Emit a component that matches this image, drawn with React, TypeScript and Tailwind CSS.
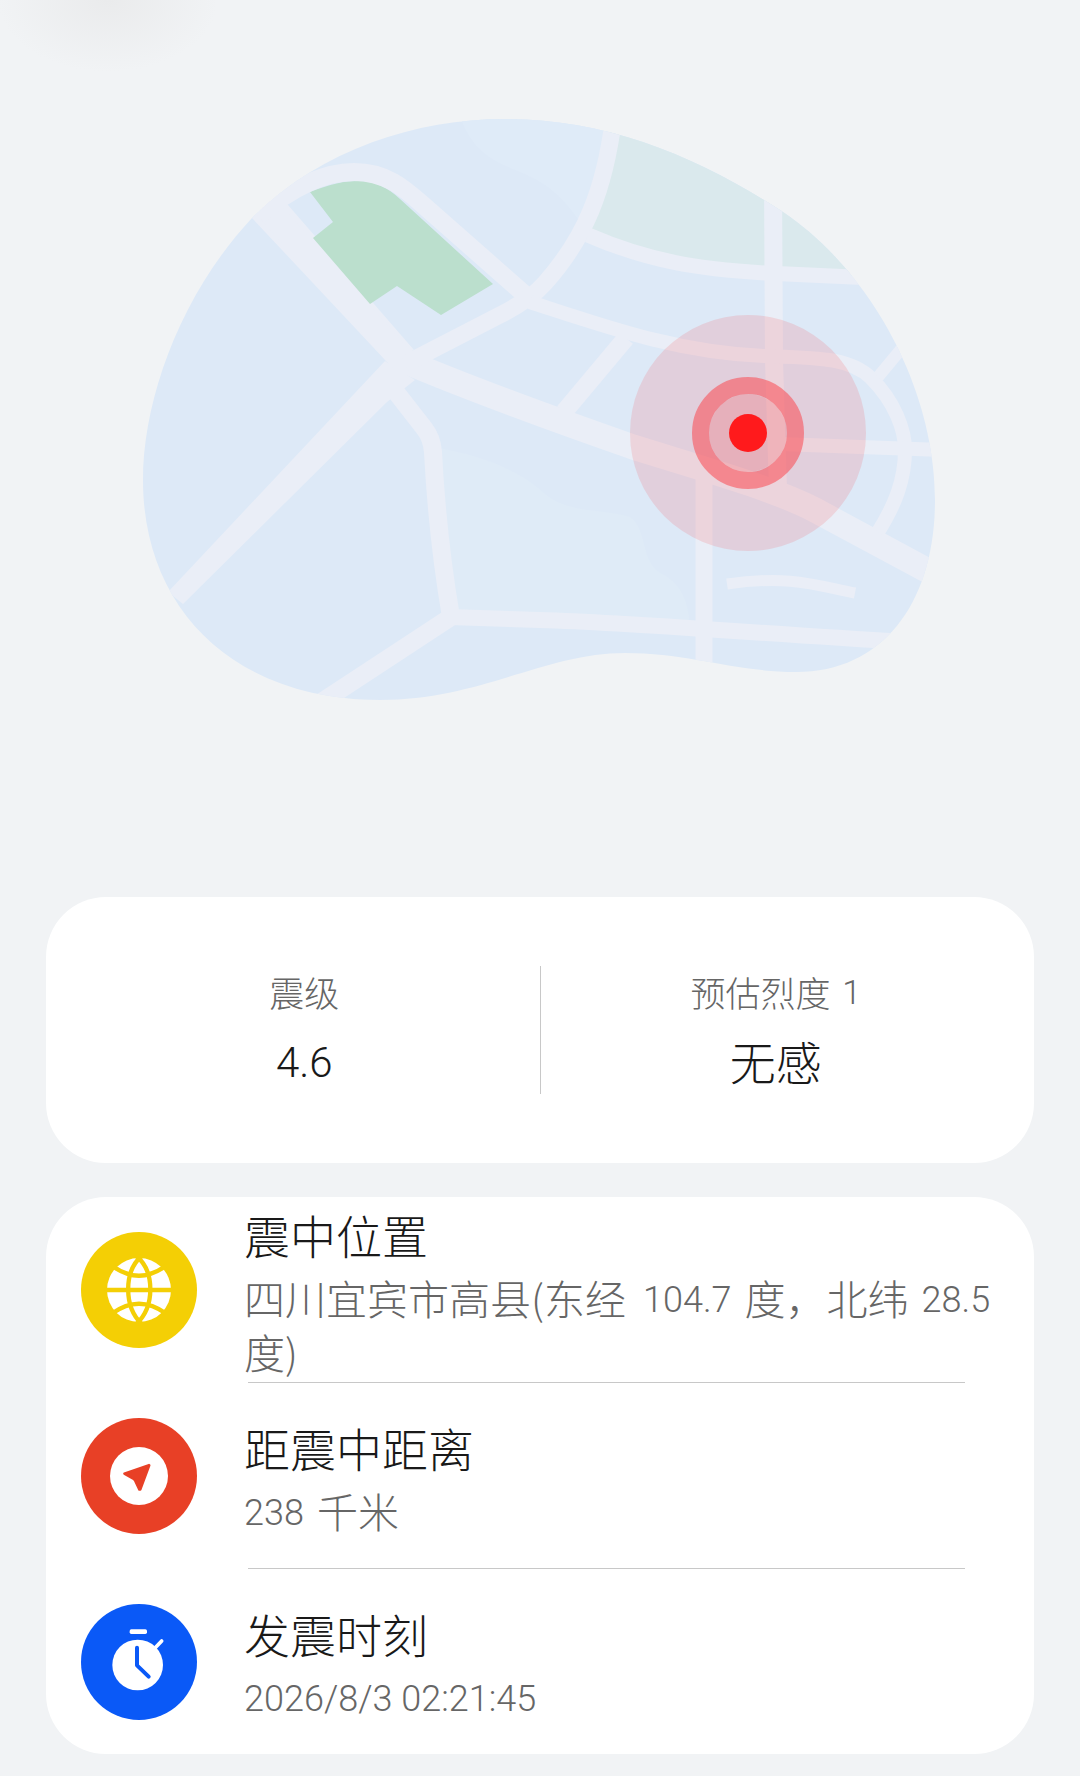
import type { ReactNode } from "react";

const ROAD = "#eaeef7";

function EpicenterMap() {
  return (
    <svg
      viewBox="144 119 792 581"
      role="img"
      aria-label="震中地图"
      className="block h-auto w-full max-w-[792px] overflow-visible"
    >
      <defs>
        <clipPath id="land">
          <path d="M505 119C610 119 700 158 783 212C872 272 935 390 935 500C935 600 885 672 796 672C735 672 690 653 625 653C545 653 480 700 380 700C235 700 143 610 143 480C143 400 180 295 252 218C320 150 415 119 505 119Z" />
        </clipPath>
      </defs>
      <g clipPath="url(#land)">
        <rect x="140" y="110" width="800" height="600" fill="#dde9f7" />
        <path d="M458 110C470 150 490 160 520 172C550 184 565 200 580 222L625 110Z" fill="#dfebf8" />
        <path d="M438 448C480 455 520 470 545 494C570 514 600 508 630 517C648 530 640 560 660 573C680 582 688 600 690 625L452 615Z" fill="#dfebf7" />
        <path d="M614 110L590 236C650 262 700 268 765 272L880 277V110Z" fill="#dae9ed" />
        <path d="M234 200L252 218L387 362L414 350L288 205L270 180Z" fill={ROAD} />
        <path
          d="M310 192C330 184 345 181 358 181C376 181 388 188 400 199L493 284L441 315L397 286L370 304L313 238L333 222Z"
          fill="#bbdfcd"
        />
        <path d="M385 361L168 592L183 604L387 402L415 380Z" fill={ROAD} />
        <g fill="none" stroke={ROAD}>
          <path d="M258 198L402 360C480 393 570 425 633 447C700 468 770 487 815 510L945 580" strokeWidth="25" strokeLinejoin="round" />
          <path d="M392 387L424 428Q432 438 433 452C436 510 443 570 451 617L320 703" strokeWidth="18" />
          <path d="M449 617L540 620C640 623 720 631 905 642" strokeWidth="16" />
          <path d="M704 460V680" strokeWidth="17" />
          <path d="M258 216Q310 172 354 172C386 172 404 188 422 204L530 299" strokeWidth="18" />
          <path d="M405 364L500 315Q530 300 545 283C585 238 605 190 614 115" strokeWidth="17" />
          <path d="M588 235C650 262 700 269 765 273L875 278" strokeWidth="15" />
          <path d="M773 180L774 360L778 490" strokeWidth="18" />
          <path d="M530 302C610 328 680 353 765 356C820 358 850 358 871 378C895 402 905 430 905 450C905 480 895 505 878 532" strokeWidth="14" />
          <path d="M912 336L878 377" strokeWidth="12" />
          <path d="M780 444L940 450" strokeWidth="14" />
          <path d="M626 338L564 412" strokeWidth="18" />
          <path d="M727 584C790 575 815 585 855 593" strokeWidth="11" />
        </g>
      </g>
      <circle cx="748" cy="433" r="118" fill="#ff2828" fillOpacity="0.13" />
      <circle cx="748" cy="433" r="39" fill="#ff2828" fillOpacity="0.18" />
      <circle cx="748" cy="433" r="47.5" fill="none" stroke="#fc4248" strokeWidth="17" strokeOpacity="0.52" />
      <circle cx="748" cy="433" r="19" fill="#ff1a1c" />
    </svg>
  );
}

function GlobeIcon() {
  return (
    <svg viewBox="0 0 348 348" className="size-[116px] shrink-0" aria-hidden="true">
      <circle cx="174" cy="174" r="174" fill="#f4cf05" />
      <circle cx="174" cy="174" r="96" fill="#fff" />
      <g fill="none" stroke="#f4cf05" strokeWidth="13">
        <path d="M70 174H278" />
        <path d="M182 72C128 118 128 224 182 276" />
        <path d="M166 72C222 118 222 224 166 276" />
        <path d="M94 102Q174 160 254 102" />
        <path d="M94 244Q174 186 254 244" />
      </g>
    </svg>
  );
}

function CompassIcon() {
  return (
    <svg viewBox="0 0 348 348" className="size-[116px] shrink-0" aria-hidden="true">
      <circle cx="174" cy="174" r="174" fill="#e84026" />
      <circle cx="174" cy="174" r="87" fill="#fff" />
      <path
        d="M204 141L130 167L158 183Q162 186 163 190L175 215L178 215L205 142Z"
        fill="#e84026"
        stroke="#e84026"
        strokeWidth="7"
        strokeLinejoin="round"
      />
    </svg>
  );
}

function StopwatchIcon() {
  return (
    <svg viewBox="0 0 348 348" className="size-[116px] shrink-0" aria-hidden="true">
      <circle cx="174" cy="174" r="174" fill="#0a59f7" />
      <circle cx="170" cy="183" r="76" fill="#fff" />
      <rect x="146" y="76" width="52" height="14" rx="5" fill="#fff" />
      <path d="M222 132L242 111" stroke="#fff" strokeWidth="11" strokeLinecap="round" />
      <path
        d="M168 131V184L203 218"
        fill="none"
        stroke="#0a59f7"
        strokeWidth="12"
        strokeLinejoin="round"
        strokeLinecap="round"
      />
    </svg>
  );
}

/* Latin digits, raised to sit centred against the Chinese glyphs. */
function Num({ className = "text-[36px]", children }: { className?: string; children: ReactNode }) {
  return (
    <span className={`align-[3px] font-['Roboto',sans-serif] leading-none ${className}`}>{children}</span>
  );
}

function Stat({ label, children }: { label: ReactNode; children: ReactNode }) {
  return (
    <div className="flex flex-1 flex-col items-center gap-2">
      <dt className="text-[35px] leading-[52px] text-[#666]">{label}</dt>
      <dd className="text-[46px] leading-[68px] text-[#191919]">{children}</dd>
    </div>
  );
}

function Detail({ icon, title, children }: { icon: ReactNode; title: string; children: ReactNode }) {
  return (
    <li className="group">
      <div className="flex min-h-[185px] items-center gap-[47px] pr-6 pl-[35px]">
        {icon}
        <div className="flex min-w-0 flex-1 flex-col gap-1">
          <h2 className="text-[46px] leading-[64px] text-[#191919]">{title}</h2>
          <p className="text-[41px] leading-[54px] text-[#666]">{children}</p>
        </div>
      </div>
      <div className="mr-[69px] ml-[202px] h-px bg-[#c8c8c8] group-last:hidden" />
    </li>
  );
}

export default function App() {
  return (
    <main
      lang="zh-CN"
      className="relative min-h-screen overflow-hidden bg-[#f1f3f5] px-[46px] pb-[22px] font-['Noto_Sans_CJK_SC',sans-serif] font-light"
    >
      <div className="pointer-events-none absolute top-0 left-0 h-[72px] w-[216px] bg-[radial-gradient(ellipse_110px_72px_at_50%_0,#eaebec,#f1f3f5)]" />
      <section className="flex justify-center pt-[119px] pb-[197px]">
        <EpicenterMap />
      </section>

      <dl className="flex items-center rounded-[60px] bg-white px-[23px] py-[69px]">
        <Stat label="震级">
          <Num className="text-[42px]">4.6</Num>
        </Stat>
        <div className="h-[128px] w-px bg-[#c8c8c8]" />
        <Stat
          label={
            <>
              预估烈度 <Num className="ml-1 text-[34px]">1</Num>
            </>
          }
        >
          无感
        </Stat>
      </dl>

      <ul className="mt-[34px] rounded-[60px] bg-white">
        <Detail icon={<GlobeIcon />} title="震中位置">
          四川宜宾市高县(东经 <Num className="mr-1 ml-2 text-[36px]">104.7</Num> 度，北纬{" "}
          <Num className="ml-1 text-[36px]">28.5</Num> 度)
        </Detail>
        <Detail icon={<CompassIcon />} title="距震中距离">
          <Num className="mr-1 text-[36px]">238</Num> 千米
        </Detail>
        <Detail icon={<StopwatchIcon />} title="发震时刻">
          <Num>2026/8/3 02:21:45</Num>
        </Detail>
      </ul>
    </main>
  );
}
